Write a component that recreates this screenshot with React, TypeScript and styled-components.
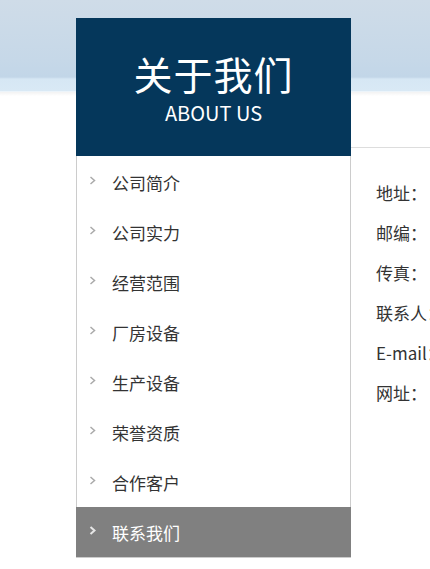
import * as React from "react";
import styled, { createGlobalStyle } from "styled-components";

const GlobalStyle = createGlobalStyle`
  html, body {
    margin: 0;
    padding: 0;
    background: #fff;
  }
  body {
    font-family: "Noto Sans CJK SC", "Noto Sans", sans-serif;
    color: #333;
  }
`;

const menuItems = [
  "公司简介",
  "公司实力",
  "经营范围",
  "厂房设备",
  "生产设备",
  "荣誉资质",
  "合作客户",
  "联系我们",
];

const contactRows = ["地址：", "邮编：", "传真：", "联系人：", "E-mail：", "网址："];

const Page = styled.div`
  width: 430px;
  height: 569px;
  overflow: hidden;
  padding-top: 18px;
  box-sizing: border-box;
  background:
    linear-gradient(180deg, rgba(0, 0, 0, 0.05), rgba(255, 255, 255, 0) 4px) 0 92px / 100% 6px no-repeat,
    linear-gradient(
        180deg,
        #cfdce8 0px,
        #c6d8e8 60px,
        #c2d6e8 77px,
        #d6e7f4 79px,
        #d9e9f5 91px,
        #ffffff 92px
      )
      0 0 / 100% 92px no-repeat,
    #fff;
`;

const Layout = styled.div`
  display: flex;
  padding-left: 76px;
`;

const Sidebar = styled.aside`
  width: 275px;
  flex-shrink: 0;
`;

const Heading = styled.div`
  height: 138px;
  background: #05375b;
  color: #fff;
  display: flex;
  flex-direction: column;
  align-items: center;
  justify-content: center;
  padding-top: 2px;
  box-sizing: border-box;
`;

const HeadingTitle = styled.div`
  font-size: 39px;
  line-height: 42px;
  letter-spacing: 1px;
`;

const HeadingSub = styled.div`
  font-size: 20px;
  line-height: 24px;
  margin-top: 7px;
`;

const Menu = styled.ul`
  list-style: none;
  margin: 0;
  padding: 1px 0 0;
  border-left: 1px solid #cccccc;
  border-right: 1px solid #cccccc;
  border-bottom: 1px solid #cccccc;
`;

const MenuItem = styled.li<{ $active?: boolean }>`
  height: 50px;
  display: flex;
  align-items: center;
  margin: 0 ${p => (p.$active ? "-1px" : "0")};
  padding-left: ${p => (p.$active ? "13px" : "12px")};
  background: ${p => (p.$active ? "#808080" : "transparent")};
  color: ${p => (p.$active ? "#fff" : "#333")};
  font-size: 17px;
`;

const Arrow = styled.svg<{ $active?: boolean }>`
  width: 7px;
  height: 9px;
  margin-right: 16px;
  margin-top: -4px;
  flex-shrink: 0;
  stroke: ${p => (p.$active ? "#e6e6e6" : "#aaaaaa")};
  stroke-width: ${p => (p.$active ? 2 : 1.5)};
  fill: none;
`;

const Content = styled.section`
  flex: 1;
  margin-top: 129px;
  border-top: 1px solid #dddddd;
  padding: 25px 0 0 25px;
  white-space: nowrap;
`;

const ContactRow = styled.div`
  font-size: 17px;
  line-height: 40px;
  color: #333;
`;

export default function App(): JSX.Element {
  const active = "联系我们";
  return (
    <>
      <GlobalStyle />
      <Page>
        <Layout>
          <Sidebar>
            <Heading>
              <HeadingTitle>关于我们</HeadingTitle>
              <HeadingSub>ABOUT US</HeadingSub>
            </Heading>
            <Menu>
              {menuItems.map(item => (
                <MenuItem key={item} $active={item === active}>
                  <Arrow $active={item === active} viewBox="0 0 7 9">
                    <polyline points="1.5,1 5.5,4.5 1.5,8" />
                  </Arrow>
                  {item}
                </MenuItem>
              ))}
            </Menu>
          </Sidebar>
          <Content>
            {contactRows.map(row => (
              <ContactRow key={row}>{row}</ContactRow>
            ))}
          </Content>
        </Layout>
      </Page>
    </>
  );
}
